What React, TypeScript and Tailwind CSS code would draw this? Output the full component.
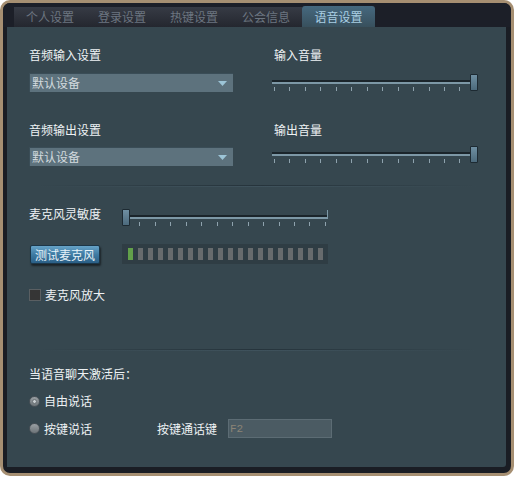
import React from "react";

const FONT = { fontFamily: '"Noto Sans CJK SC", "Noto Sans", sans-serif' };

function Slider({ thumbLeft }: { thumbLeft: boolean }) {
  const ticks = Array.from({ length: 14 });
  return (
    <div className="relative w-[206px] h-[18px]">
      <div className="absolute left-0 right-0 top-[6px] h-[2px] bg-[#1b252b]" />
      <div className="absolute left-0 right-0 top-[8px] h-[2px] bg-[#7d98a6]" />
      {!thumbLeft && <div className="absolute right-0 top-[3px] h-[8px] w-px bg-[#7d98a6]" />}
      {thumbLeft && <div className="absolute right-0 top-[1px] h-[9px] w-px bg-[#7d98a6]" />}
      <div className="absolute left-[2px] right-[2px] top-[13px] h-[5px] flex justify-between">
        {ticks.map((_, i) => (
          <div key={i} className="w-px h-[4px] bg-[#8ea2ad]" />
        ))}
      </div>
      <div
        className={`absolute top-0 w-[8px] h-[17px] rounded-[1px] border border-[#1d2a32] bg-gradient-to-b from-[#6f8fa2] to-[#4c6a7c] ${
          thumbLeft ? "left-0" : "right-0"
        }`}
      />
    </div>
  );
}

function Select() {
  return (
    <div className="w-[204px] h-[19px] bg-[#5d727d] border-t border-l border-[#3a4d57] flex items-center justify-between pl-[2px] pr-[6px]">
      <span className="text-[12px] leading-4 text-[#d2dadd]">默认设备</span>
      <svg width="9" height="5" viewBox="0 0 9 5">
        <polygon points="0,0 9,0 4.5,5" fill="#9cc4d6" />
      </svg>
    </div>
  );
}

function Separator() {
  return (
    <div className="h-[2px] w-[440px] ml-[8px] flex flex-col">
      <div className="h-px bg-gradient-to-r from-transparent via-[#26343c] to-transparent" />
      <div className="h-px bg-gradient-to-r from-transparent via-[#3f525c] to-transparent" />
    </div>
  );
}

function Radio({ checked }: { checked: boolean }) {
  return (
    <div className="w-[11px] h-[11px] rounded-full bg-gradient-to-b from-[#9aa0a4] to-[#6d7478] border border-[#4a5258] flex items-center justify-center">
      {checked && <div className="w-[5px] h-[5px] rounded-full bg-[#c9ced1] border border-[#6a7175]" />}
    </div>
  );
}

export default function App() {
  const tabs = ["个人设置", "登录设置", "热键设置", "公会信息"];
  const bars = Array.from({ length: 20 });
  return (
    <div className="w-[515px] h-[478px] bg-white" style={FONT}>
      <div className="w-[514px] h-[476px] rounded-[10px] border-[3px] border-[#a68f72] bg-[#1a1d24] flex flex-col overflow-hidden">
        {/* top tab bar */}
        <div className="h-[24px] flex items-end pl-[11px] bg-[#1c1f28]">
          <div className="flex h-[20px] bg-gradient-to-b from-[#373b45] to-[#24272f]">
            {tabs.map((t) => (
              <div key={t} className="w-[72px] flex items-center justify-center text-[12px] text-[#6c7580] pb-[1px]">
                {t}
              </div>
            ))}
          </div>
          <div className="w-[73px] h-[21px] rounded-t-[3px] bg-gradient-to-b from-[#46697f] to-[#38505d] flex items-center justify-center text-[12px] text-[#a9cfe3]">
            语音设置
          </div>
        </div>

        {/* content panel */}
        <div className="flex-1 ml-[4px] mr-[5px] mb-[6px] bg-[#36474f] rounded-br-[3px] pl-[22px] pt-[20px] flex flex-col text-[12px] leading-4 text-[#eef2f4]">
          <div className="flex">
            <div className="flex flex-col w-[204px]">
              <div className="h-4">音频输入设置</div>
              <div className="mt-[10px]">
                <Select />
              </div>
              <div className="h-4 mt-[30px]">音频输出设置</div>
              <div className="mt-[9px]">
                <Select />
              </div>
            </div>
            <div className="flex flex-col ml-[39px] w-[206px]">
              <div className="h-4 pl-[2px]">输入音量</div>
              <div className="mt-[11px]">
                <Slider thumbLeft={false} />
              </div>
              <div className="h-4 mt-[30px] pl-[2px]">输出音量</div>
              <div className="mt-[8px]">
                <Slider thumbLeft={false} />
              </div>
            </div>
          </div>

          <div className="mt-[19px]">
            <Separator />
          </div>

          <div className="flex mt-[19px]">
            <div className="w-[93px] h-4">麦克风灵敏度</div>
            <div className="mt-[3px]">
              <Slider thumbLeft={true} />
            </div>
          </div>

          <div className="flex mt-[17px]">
            <div className="w-[93px] pt-px">
              <div className="ml-px w-[70px] h-[19px] rounded-[2px] border border-[#1c3648] bg-gradient-to-b from-[#66a3c8] via-[#3f7ba3] to-[#2a5f86] shadow-[1px_2px_2px_rgba(0,0,0,0.5)] flex items-center justify-center text-[12px] text-[#e6f2f8]">
                测试麦克风
              </div>
            </div>
            <div className="w-[206px] h-[20px] bg-[#2f3d44] flex items-center pl-[6px] gap-[5px]">
              {bars.map((_, i) => (
                <div key={i} className={`w-[5px] h-[12px] ${i === 0 ? "bg-[#62a04a]" : "bg-[#676b6d]"}`} />
              ))}
            </div>
          </div>

          <div className="flex items-center mt-[23px] h-4">
            <div className="w-[12px] h-[12px] bg-[#353535] border border-[#5a5f62]" />
            <div className="ml-[4px]">麦克风放大</div>
          </div>

          <div className="mt-[46px]">
            <Separator />
          </div>

          <div className="h-4 mt-[15px]">当语音聊天激活后：</div>

          <div className="flex items-center h-4 mt-[11px]">
            <Radio checked={true} />
            <div className="ml-[4px]">自由说话</div>
          </div>

          <div className="flex items-center h-[19px] mt-[10px]">
            <div className="flex items-center w-[128px]">
              <Radio checked={false} />
              <div className="ml-[4px]">按键说话</div>
            </div>
            <div className="w-[60px]">按键通话键</div>
            <div className="ml-[11px] w-[104px] h-[19px] bg-[#4b5b63] border border-[#5c6c74] flex items-center pl-[1px]">
              <span className="text-[11px] text-[#8b8476]" style={{ fontFamily: '"Liberation Mono", monospace' }}>
                F2
              </span>
            </div>
          </div>
        </div>
      </div>
    </div>
  );
}
